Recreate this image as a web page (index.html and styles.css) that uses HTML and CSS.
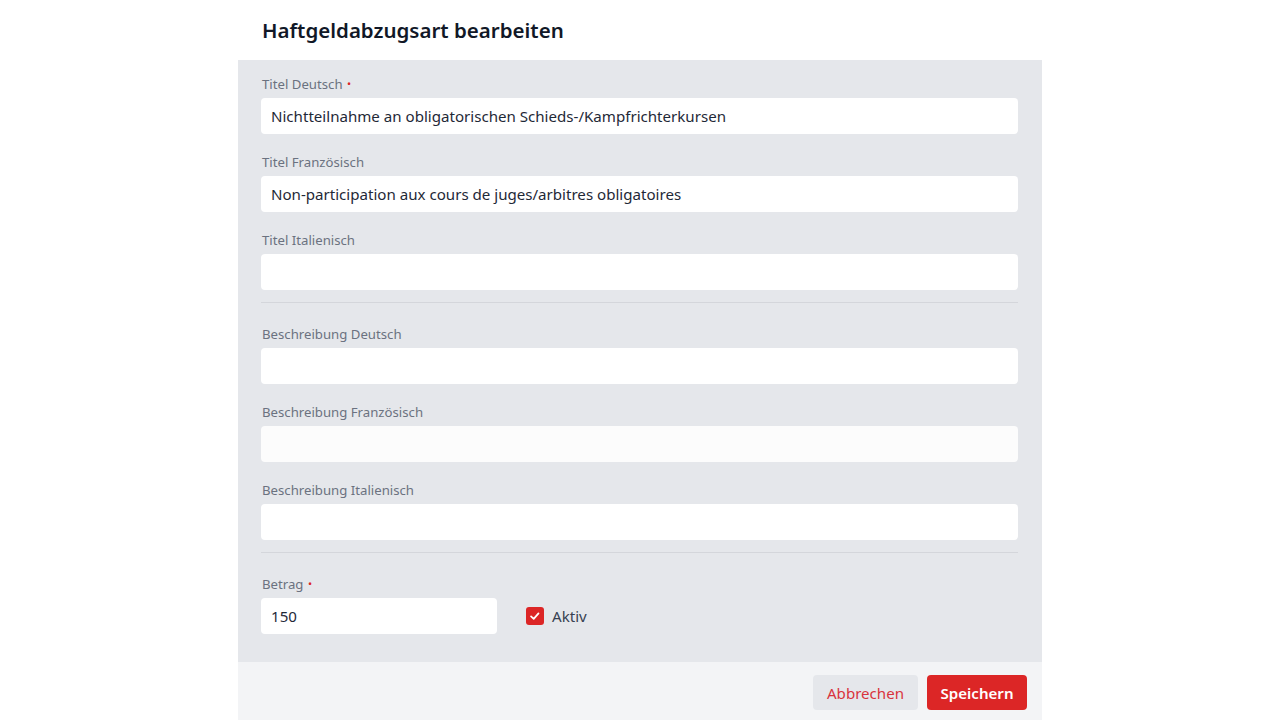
FILE: index.html
```html
<!DOCTYPE html>
<html lang="de">
<head>
    <meta charset="UTF-8">
    <meta name="viewport" content="width=device-width, initial-scale=1.0">
    <title>Haftgeldabzugsart bearbeiten</title>
    <link rel="stylesheet" href="styles.css">
</head>
<body>
    <div class="modal">
        <header class="modal-header">
            <h2>Haftgeldabzugsart bearbeiten</h2>
        </header>

        <form class="modal-body" id="deductionForm">
            <div class="field">
                <label for="titleDe">Titel Deutsch <span class="required">•</span></label>
                <input type="text" id="titleDe" value="Nichtteilnahme an obligatorischen Schieds-/Kampfrichterkursen">
            </div>
            <div class="field">
                <label for="titleFr">Titel Französisch</label>
                <input type="text" id="titleFr" value="Non-participation aux cours de juges/arbitres obligatoires">
            </div>
            <div class="field">
                <label for="titleIt">Titel Italienisch</label>
                <input type="text" id="titleIt">
            </div>

            <hr class="divider">

            <div class="field">
                <label for="descDe">Beschreibung Deutsch</label>
                <input type="text" id="descDe">
            </div>
            <div class="field">
                <label for="descFr">Beschreibung Französisch</label>
                <input type="text" id="descFr" class="muted">
            </div>
            <div class="field">
                <label for="descIt">Beschreibung Italienisch</label>
                <input type="text" id="descIt">
            </div>

            <hr class="divider">

            <div class="field">
                <label for="amount">Betrag <span class="required">•</span></label>
                <div class="amount-row">
                    <input type="text" id="amount" class="amount" value="150">
                    <label class="check">
                        <span class="checkbox">
                            <svg viewBox="0 0 16 16" width="14" height="14">
                                <path d="M3.5 8.5l3 2.8 5.5-6.3" fill="none" stroke="#fff" stroke-width="2" stroke-linecap="round" stroke-linejoin="round"/>
                            </svg>
                        </span>
                        Aktiv
                    </label>
                </div>
            </div>
        </form>

        <footer class="modal-footer">
            <button type="button" class="btn btn-cancel">Abbrechen</button>
            <button type="submit" form="deductionForm" class="btn btn-save">Speichern</button>
        </footer>
    </div>
</body>
</html>
```

FILE: styles.css
```css
body {
    margin: 0;
    padding: 0;
    background-color: #fff;
    font-family: "Noto Sans", Arial, sans-serif;
    color: #1f2937;
}

.modal {
    width: 804px;
    margin: 0 auto 0 238px;
    height: 720px;
    display: flex;
    flex-direction: column;
}

.modal-header {
    height: 60px;
    display: flex;
    align-items: center;
    padding: 0 24px;
    background-color: #fff;
}

.modal-header h2 {
    margin: 0;
    font-size: 20.5px;
    font-weight: 600;
    color: #111827;
}

.modal-body {
    background-color: #e5e7eb;
    padding: 14px 24px 10px 23px;
    flex: 0 0 auto;
    height: 578px;
}

.field {
    display: flex;
    flex-direction: column;
    margin-bottom: 18px;
}

.field > label {
    font-size: 13.2px;
    line-height: 20px;
    color: #6b7280;
    margin: 0 0 4px 1px;
}

.required {
    color: #dc2626;
    font-size: 11px;
    margin-left: 1px;
    vertical-align: 1px;
}

.field input {
    height: 36px;
    box-sizing: border-box;
    border: none;
    border-radius: 4px;
    background-color: #fff;
    padding: 0 10px;
    font-family: inherit;
    font-size: 15.1px;
    color: #1f2937;
    outline: none;
}

.field input.muted {
    background-color: #fcfcfc;
}

.divider {
    border: none;
    border-top: 1px solid #d4d6db;
    margin: -6px 0 21px;
}

.amount-row {
    display: flex;
    align-items: center;
    gap: 29px;
}

.field input.amount {
    width: 236px;
}

.check {
    display: flex;
    align-items: center;
    gap: 8px;
    font-size: 15.1px;
    color: #374151;
}

.checkbox {
    width: 18px;
    height: 18px;
    border-radius: 3px;
    background-color: #dc2626;
    display: flex;
    align-items: center;
    justify-content: center;
}

.modal-footer {
    flex: 1;
    background-color: #f3f4f6;
    display: flex;
    justify-content: flex-end;
    align-items: flex-start;
    padding: 13px 15px 0;
    gap: 9px;
}

.btn {
    height: 35px;
    border: none;
    border-radius: 4px;
    font-family: inherit;
    font-size: 15.1px;
    cursor: pointer;
    padding: 0 10px;
}

.btn-cancel {
    background-color: #e5e7eb;
    color: #d9343d;
    width: 105px;
}

.btn-save {
    background-color: #dc2626;
    color: #fff;
    font-weight: 600;
    width: 100px;
}
```
